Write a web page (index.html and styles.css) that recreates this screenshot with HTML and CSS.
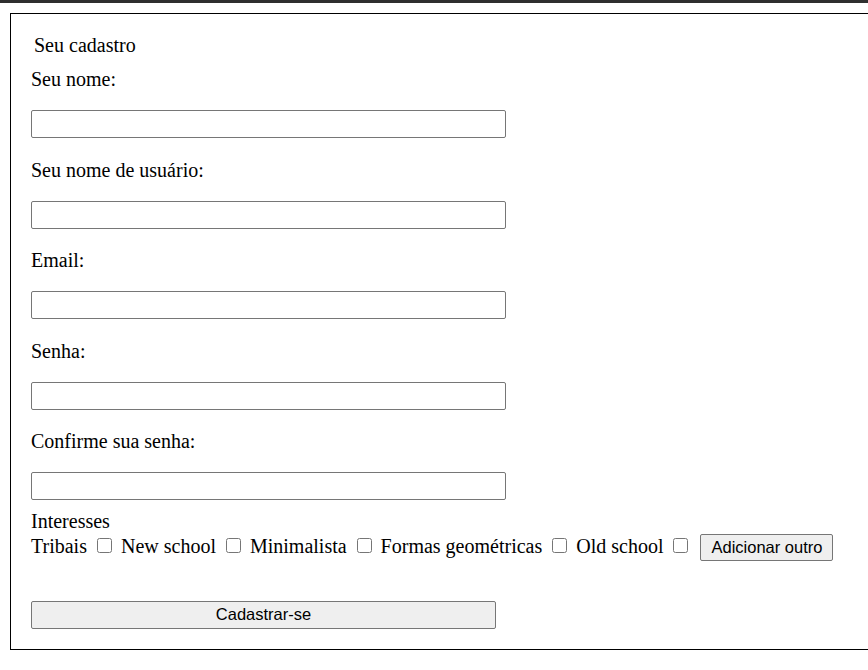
FILE: index.html
```html
<!DOCTYPE html>
<html lang="pt-BR">
<head>
<meta charset="utf-8">
<title>Seu cadastro</title>
<link rel="stylesheet" href="styles.css">
</head>
<body>
<div class="topbar"></div>
<form class="cadastro">
  <div class="titulo">Seu cadastro</div>
  <div class="campo">
    <label class="rotulo" for="nome">Seu nome:</label>
    <input class="entrada" id="nome" type="text">
  </div>
  <div class="campo">
    <label class="rotulo" for="usuario">Seu nome de usuário:</label>
    <input class="entrada" id="usuario" type="text">
  </div>
  <div class="campo">
    <label class="rotulo" for="email">Email:</label>
    <input class="entrada" id="email" type="email">
  </div>
  <div class="campo">
    <label class="rotulo" for="senha">Senha:</label>
    <input class="entrada" id="senha" type="password">
  </div>
  <div class="campo">
    <label class="rotulo" for="confirma">Confirme sua senha:</label>
    <input class="entrada" id="confirma" type="password">
  </div>
  <div class="interesses">
    <div class="rotulo-int">Interesses</div>
    <div class="opcoes">Tribais <input class="check" type="checkbox"> New school <input class="check" type="checkbox"> Minimalista <input class="check" type="checkbox"> Formas geométricas <input class="check" type="checkbox"> Old school <input class="check" type="checkbox"> <button class="botao" type="button">Adicionar outro</button></div>
  </div>
  <button class="botao enviar" type="submit">Cadastrar-se</button>
</form>
</body>
</html>
```
FILE: styles.css
```css
html, body {
  margin: 0;
  padding: 0;
  overflow: hidden;
  background: #ffffff;
}
body {
  font-family: "Liberation Serif", "Times New Roman", serif;
  font-size: 20px;
  color: #000000;
}
.topbar {
  height: 3px;
  background: #2f2f2f;
}
.cadastro {
  margin: 10px 0 0 10px;
  width: 900px;
  border: 1px solid #000000;
  padding: 20px 0 20px 20px;
  box-sizing: border-box;
  height: 637px;
}
.titulo {
  line-height: 23px;
  padding-left: 3px;
  margin-bottom: 11px;
}
.campo {
  display: flex;
  flex-direction: column;
  align-items: flex-start;
  margin-bottom: 20.5px;
}
.rotulo {
  line-height: 23px;
  margin-bottom: 19px;
}
.entrada {
  width: 475px;
  height: 28px;
  box-sizing: border-box;
  border: 1px solid #767676;
  border-radius: 2px;
  margin: 0;
  padding: 1px 2px;
  font-size: 16px;
  background: #ffffff;
}
.interesses {
  margin-top: -11px;
}
.rotulo-int {
  line-height: 23px;
}
.opcoes {
  line-height: 23px;
  margin-top: 1px;
}
.check {
  width: 15px;
  height: 15px;
  margin: 3px 4px 3px 5px;
  vertical-align: baseline;
}
.botao {
  font-family: "Liberation Sans", Arial, sans-serif;
  font-size: 16.5px;
  height: 27px;
  padding: 1px 10px;
  border: 1px solid #767676;
  border-radius: 2px;
  background: #efefef;
  color: #000000;
  box-sizing: border-box;
  margin-left: 3px;
}
.enviar {
  display: block;
  width: 465px;
  height: 28px;
  margin: 40px 0 0 0;
}
```
